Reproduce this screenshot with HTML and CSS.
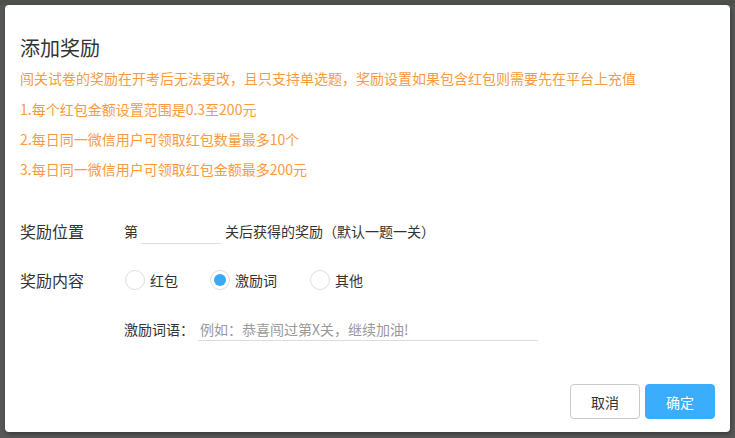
FILE: index.html
```html
<!DOCTYPE html>
<html lang="zh-CN">
<head>
<meta charset="utf-8">
<title>添加奖励</title>
<link rel="stylesheet" href="styles.css">
</head>
<body>
<div class="backdrop">
  <div class="topstrip"></div>
  <div class="modal">
    <h2 class="title">添加奖励</h2>
    <div class="notices">
      <p class="notice first">闯关试卷的奖励在开考后无法更改，且只支持单选题，奖励设置如果包含红包则需要先在平台上充值</p>
      <p class="notice second">1.每个红包金额设置范围是0.3至200元</p>
      <p class="notice">2.每日同一微信用户可领取红包数量最多10个</p>
      <p class="notice">3.每日同一微信用户可领取红包金额最多200元</p>
    </div>
    <div class="form">
      <div class="row">
        <div class="label">奖励位置</div>
        <div class="field">
          <span class="text">第</span>
          <input class="line-input short" type="text">
          <span class="text">关后获得的奖励（默认一题一关）</span>
        </div>
      </div>
      <div class="row">
        <div class="label">奖励内容</div>
        <div class="field radios">
          <label class="radio"><span class="dot"></span><span class="text">红包</span></label>
          <label class="radio checked"><span class="dot"></span><span class="text">激励词</span></label>
          <label class="radio"><span class="dot"></span><span class="text">其他</span></label>
        </div>
      </div>
      <div class="row">
        <div class="label"></div>
        <div class="field">
          <span class="text sublabel">激励词语：</span>
          <input class="line-input long" type="text" placeholder="例如：恭喜闯过第X关，继续加油!">
        </div>
      </div>
    </div>
    <div class="footer">
      <button class="btn cancel">取消</button>
      <button class="btn primary">确定</button>
    </div>
  </div>
</div>
</body>
</html>
```
FILE: styles.css
```css
* { box-sizing: border-box; }
html, body {
  margin: 0;
  width: 735px;
  height: 438px;
  overflow: hidden;
  background: #575757;
  font-family: "Noto Sans CJK SC", "Noto Sans", sans-serif;
}
.backdrop {
  position: relative;
  width: 735px;
  height: 438px;
  padding: 5px 0 0 5px;
}
.topstrip {
  position: absolute;
  left: 0;
  top: 0;
  width: 735px;
  height: 5px;
  background: #4d504b;
}
.modal {
  position: relative;
  width: 725px;
  height: 427px;
  background: #fff;
  border-radius: 4px;
  box-shadow: 1px 2px 4px rgba(0,0,0,0.35);
  padding: 29px 15px 13px 15px;
  display: flex;
  flex-direction: column;
}
.title {
  margin: 0;
  font-size: 20px;
  font-weight: normal;
  line-height: 28px;
  color: #333;
}
.notices { margin-top: 1px; }
.notice {
  margin: 0;
  font-size: 14px;
  line-height: 30px;
  color: #fb9a40;
}
.notice.second { margin-top: 1px; }
.form {
  margin-top: 29px;
  display: flex;
  flex-direction: column;
  gap: 13px;
}
.row {
  display: flex;
  align-items: center;
  height: 36px;
}
.label {
  width: 104px;
  font-size: 16px;
  color: #333;
  line-height: 20px;
}
.field {
  display: flex;
  align-items: center;
}
.text {
  font-size: 14px;
  color: #333;
  line-height: 20px;
}
.line-input {
  height: 24px;
  border: none;
  border-bottom: 1px solid #dcdcdc;
  outline: none;
  font-family: inherit;
  font-size: 14px;
  color: #333;
  padding: 0 2px;
  background: transparent;
}
.line-input.short {
  width: 80px;
  margin: 0 4px 0 3px;
  position: relative;
  top: 1px;
}
.line-input.long {
  width: 340px;
  margin-left: 4px;
}
.line-input::placeholder { color: #9a9a9a; }
.sublabel { width: 70px; }
.radios { margin-left: 1px; }
.radio {
  display: flex;
  align-items: center;
  margin-right: 32px;
}
.radio .dot {
  width: 20px;
  height: 20px;
  border: 1px solid #dedede;
  border-radius: 50%;
  margin-right: 5px;
  display: flex;
  align-items: center;
  justify-content: center;
}
.radio.checked .dot::after {
  content: "";
  width: 12px;
  height: 12px;
  border-radius: 50%;
  background: #3aa9f8;
}
.radio.checked { margin-right: 33px; }
.footer {
  margin-top: auto;
  display: flex;
  justify-content: flex-end;
  gap: 5px;
}
.btn {
  width: 70px;
  height: 35px;
  border-radius: 4px;
  font-family: inherit;
  font-size: 14px;
  cursor: pointer;
}
.btn.cancel {
  background: #fff;
  border: 1px solid #c9c9c9;
  color: #333;
}
.btn.primary {
  background: #3badfd;
  border: 1px solid #3badfd;
  color: #fff;
}
```
